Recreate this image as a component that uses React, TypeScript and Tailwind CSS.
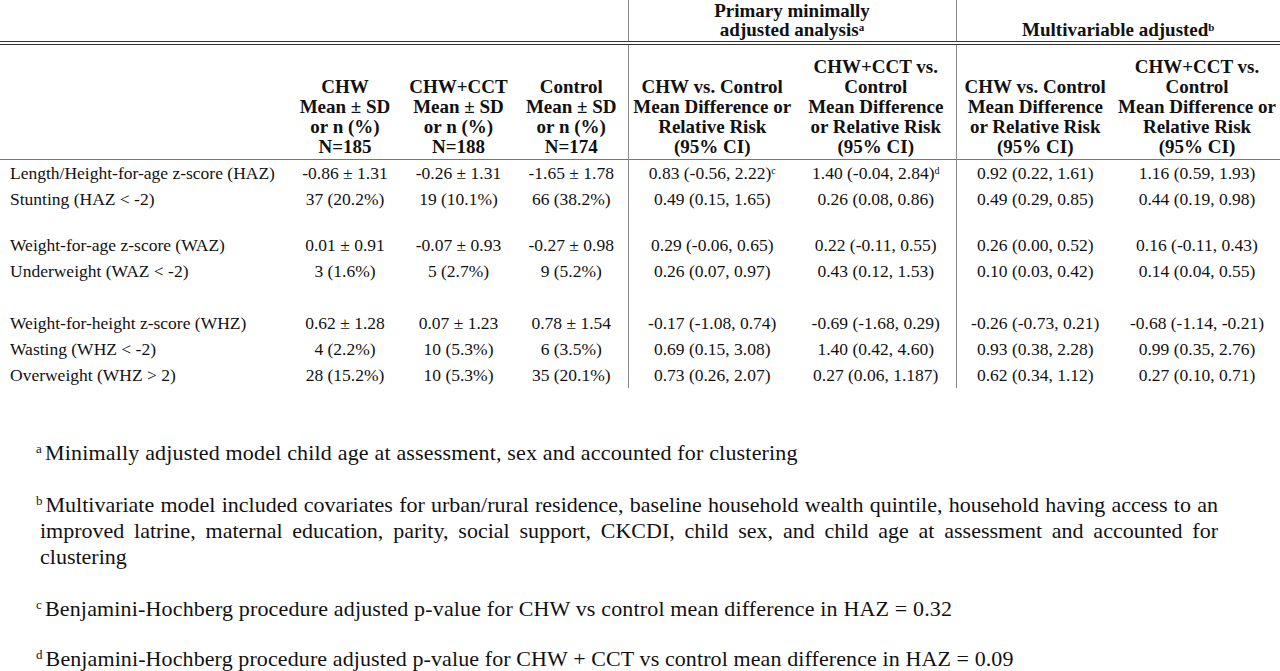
import React from "react";

type Row = { label: string; vals: React.ReactNode[] } | { gap: string };

const rows: Row[] = [
    {
        label: "Length/Height-for-age z-score (HAZ)",
        vals: [
            "-0.86 ± 1.31",
            "-0.26 ± 1.31",
            "-1.65 ± 1.78",
            <>0.83 (-0.56, 2.22)<sup className="text-[10px]">c</sup></>,
            <>1.40 (-0.04, 2.84)<sup className="text-[10px]">d</sup></>,
            "0.92 (0.22, 1.61)",
            "1.16 (0.59, 1.93)",
        ],
    },
    {
        label: "Stunting (HAZ < -2)",
        vals: ["37 (20.2%)", "19 (10.1%)", "66 (38.2%)", "0.49 (0.15, 1.65)", "0.26 (0.08, 0.86)", "0.49 (0.29, 0.85)", "0.44 (0.19, 0.98)"],
    },
    { gap: "h-[20px]" },
    {
        label: "Weight-for-age z-score (WAZ)",
        vals: ["0.01 ± 0.91", "-0.07 ± 0.93", "-0.27 ± 0.98", "0.29 (-0.06, 0.65)", "0.22 (-0.11, 0.55)", "0.26 (0.00, 0.52)", "0.16 (-0.11, 0.43)"],
    },
    {
        label: "Underweight (WAZ < -2)",
        vals: ["3 (1.6%)", "5 (2.7%)", "9 (5.2%)", "0.26 (0.07, 0.97)", "0.43 (0.12, 1.53)", "0.10 (0.03, 0.42)", "0.14 (0.04, 0.55)"],
    },
    { gap: "h-[26px]" },
    {
        label: "Weight-for-height z-score (WHZ)",
        vals: ["0.62 ± 1.28", "0.07 ± 1.23", "0.78 ± 1.54", "-0.17 (-1.08, 0.74)", "-0.69 (-1.68, 0.29)", "-0.26 (-0.73, 0.21)", "-0.68 (-1.14, -0.21)"],
    },
    {
        label: "Wasting (WHZ < -2)",
        vals: ["4 (2.2%)", "10 (5.3%)", "6 (3.5%)", "0.69 (0.15, 3.08)", "1.40 (0.42, 4.60)", "0.93 (0.38, 2.28)", "0.99 (0.35, 2.76)"],
    },
    {
        label: "Overweight (WHZ > 2)",
        vals: ["28 (15.2%)", "10 (5.3%)", "35 (20.1%)", "0.73 (0.26, 2.07)", "0.27 (0.06, 1.187)", "0.62 (0.34, 1.12)", "0.27 (0.10, 0.71)"],
    },
];

const divider = "border-l border-[#8a8a8a]";

export default function App() {
    return (
        <div className="w-[1280px] h-[671px] overflow-hidden bg-white text-[#111] font-['Liberation_Serif',serif]">
            <table className="w-[1280px] table-fixed border-collapse">
                <colgroup>
                    <col className="w-[288px]" />
                    <col className="w-[114px]" />
                    <col className="w-[113px]" />
                    <col className="w-[113px]" />
                    <col className="w-[168px]" />
                    <col className="w-[160px]" />
                    <col className="w-[158px]" />
                    <col className="w-[166px]" />
                </colgroup>
                <thead>
                    {/* group header */}
                    <tr className="h-[43px] text-[19px] leading-[19px] font-bold">
                        <th colSpan={4} className="border-b-[4px] border-double border-b-[#333]" />
                        <th colSpan={2} className={`${divider} border-b-[4px] border-double border-b-[#333] align-bottom pb-[2px]`}>
                            Primary minimally
                            <br />
                            adjusted analysis<sup className="text-[11px]">a</sup>
                        </th>
                        <th colSpan={2} className={`${divider} border-b-[4px] border-double border-b-[#333] align-bottom pb-[2px]`}>
                            Multivariable adjusted<sup className="text-[11px]">b</sup>
                        </th>
                    </tr>
                    {/* column headers */}
                    <tr className="h-[116px] text-[19px] leading-[20px] font-bold border-b border-[#777] [&>th]:align-bottom [&>th]:pb-[2px]">
                        <th />
                        <th>CHW<br />Mean ± SD<br />or n (%)<br />N=185</th>
                        <th>CHW+CCT<br />Mean ± SD<br />or n (%)<br />N=188</th>
                        <th>Control<br />Mean ± SD<br />or n (%)<br />N=174</th>
                        <th className={divider}>CHW vs. Control<br />Mean Difference or<br />Relative Risk<br />(95% CI)</th>
                        <th>CHW+CCT vs.<br />Control<br />Mean Difference<br />or Relative Risk<br />(95% CI)</th>
                        <th className={divider}>CHW vs. Control<br />Mean Difference<br />or Relative Risk<br />(95% CI)</th>
                        <th>CHW+CCT vs.<br />Control<br />Mean Difference or<br />Relative Risk<br />(95% CI)</th>
                    </tr>
                </thead>
                <tbody className="text-[17.5px] leading-[26px]">
                    {rows.map((r, i) =>
                        "gap" in r ? (
                            <tr key={i} className={r.gap}>
                                <td colSpan={4} />
                                <td colSpan={2} className={divider} />
                                <td colSpan={2} className={divider} />
                            </tr>
                        ) : (
                            <tr key={i} className="h-[26px]">
                                <td className="pl-[10px] whitespace-nowrap">{r.label}</td>
                                {r.vals.map((v, j) => (
                                    <td key={j} className={`text-center whitespace-nowrap ${j === 3 || j === 5 ? divider : ""}`}>
                                        {v}
                                    </td>
                                ))}
                            </tr>
                        )
                    )}
                </tbody>
            </table>

            {/* Footnotes */}
            <div className="pl-[36px] pr-[62px] pt-[52px] text-[22px] leading-[26px]">
                <p className="tracking-[0.18px]"><sup className="text-[13px] mr-[3px]">a</sup>Minimally adjusted model child age at assessment, sex and accounted for clustering</p>
                <p className="mt-[26px] pl-[4px] -indent-[4px] text-justify">
                    <sup className="text-[13px] mr-[3px]">b</sup>Multivariate model included covariates for urban/rural residence, baseline household wealth quintile, household having access to an improved latrine, maternal education, parity, social support, CKCDI, child sex, and child age at assessment and accounted for clustering
                </p>
                <p className="mt-[26px] tracking-[0.16px]"><sup className="text-[13px] mr-[3px]">c</sup>Benjamini-Hochberg procedure adjusted p-value for CHW vs control mean difference in HAZ = 0.32</p>
                <p className="mt-[24px] tracking-[0.1px]"><sup className="text-[13px] mr-[3px]">d</sup>Benjamini-Hochberg procedure adjusted p-value for CHW + CCT vs control mean difference in HAZ = 0.09</p>
            </div>
        </div>
    );
}
